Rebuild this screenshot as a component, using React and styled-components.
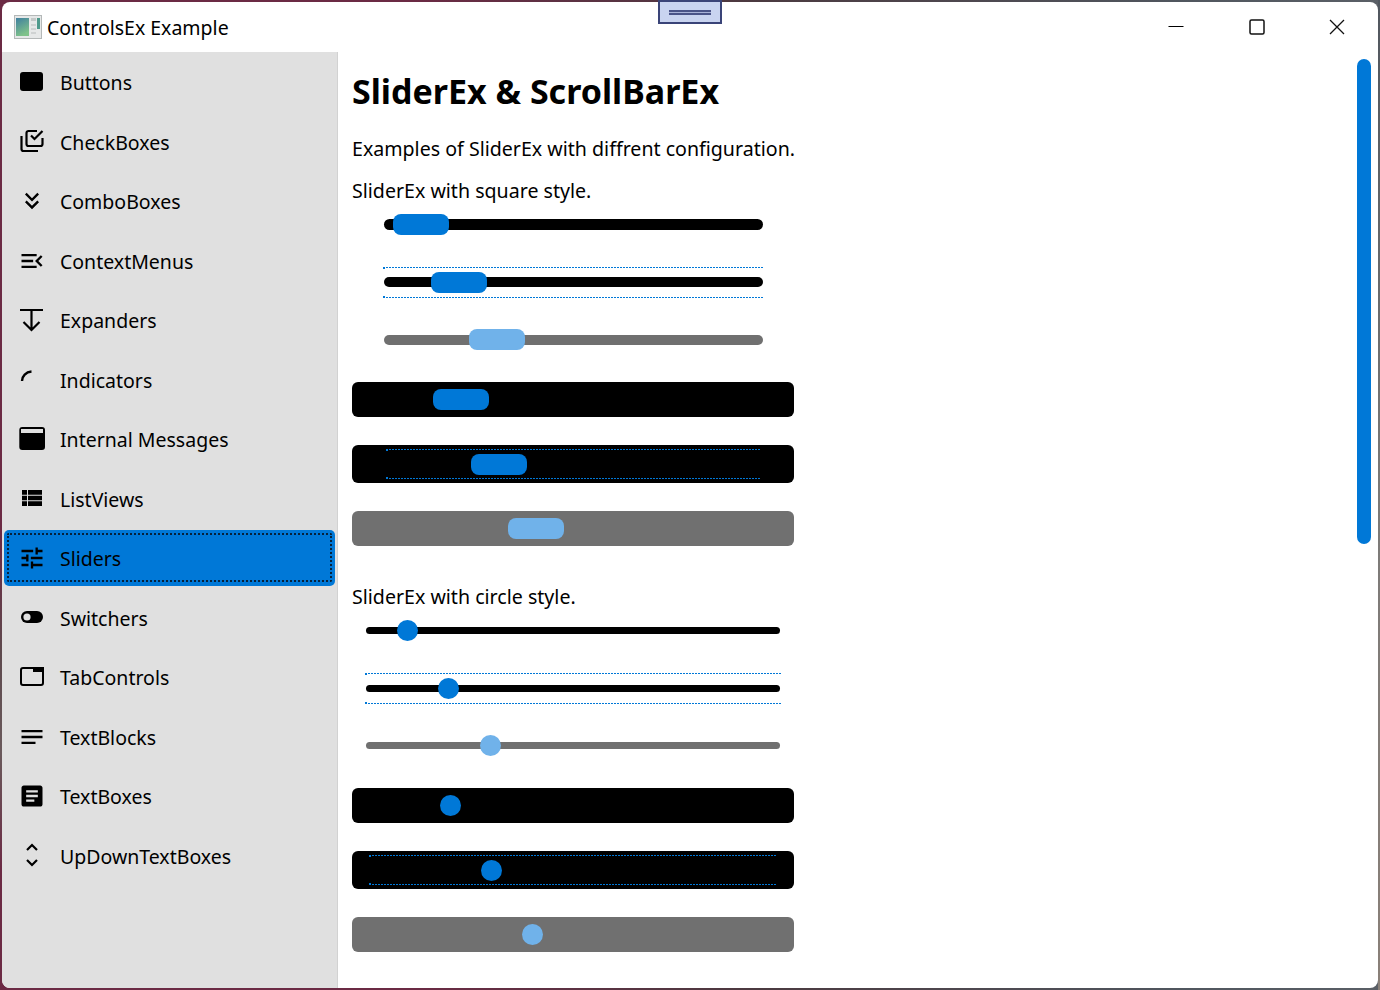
import React from "react";
import styled, { createGlobalStyle, css } from "styled-components";
import {
  MdKeyboardDoubleArrowDown,
  MdMenuOpen,
  MdTune,
  MdNotes,
  MdArticle,
} from "react-icons/md";

const GlobalStyle = createGlobalStyle`
  html, body {
    margin: 0;
    height: 990px;
    overflow: hidden;
  }
  body {
    font-family: "Noto Sans", "Open Sans", sans-serif;
    color: #000;
    background:
      linear-gradient(180deg, #6b2a44 0%, #6b2a44 55%, #5e4a4e 66%, #6a5a5c 76%, #6b2a44 88%) left top / 2px 100% no-repeat,
      linear-gradient(180deg, #50565e 0%, #7c7a78 50%, #8a8078 100%) right top / 2px 100% no-repeat,
      linear-gradient(90deg, #6b2a44 0%, #6b2a44 30%, #4b3a40 55%, #50565e 85%, #5a5f66 100%);
  }
`;

const Page = styled.div`
  padding: 2px;
  width: 1376px;
  height: 986px;
  position: relative;
`;

const Win = styled.div`
  width: 1376px;
  height: 986px;
  background: #fff;
  border-radius: 8px;
  overflow: hidden;
  display: flex;
  flex-direction: column;
`;

const TitleBar = styled.header`
  height: 50px;
  flex: none;
  display: flex;
  align-items: center;
  padding-left: 12px;
`;

const AppTitle = styled.span`
  margin-left: 5px;
  margin-top: 2px;
  font-size: 19.5px;
  line-height: 50px;
`;

const WindowButtons = styled.div`
  margin-left: auto;
  display: flex;
  padding: 0 0.5px 1px 0;
`;

const WindowButton = styled.div`
  width: 80.5px;
  height: 49px;
  display: flex;
  align-items: center;
  justify-content: center;
`;

const Grip = styled.div`
  position: absolute;
  left: 658px;
  top: 0;
  width: 64px;
  height: 24px;
  box-sizing: border-box;
  background: #c9d4f0;
  border: 2px solid #3a4478;
  display: flex;
  align-items: center;
  justify-content: center;
  padding-top: 1px;
  &::after {
    content: "";
    width: 42px;
    height: 1px;
    border-top: 2px solid #4a5488;
    border-bottom: 2px solid #4a5488;
    background: #a9b3d8;
  }
`;

const Body = styled.div`
  flex: 1;
  display: flex;
  min-height: 0;
`;

const Sidebar = styled.nav`
  width: 331px;
  flex: none;
  background: #e0e0e0;
  border-right: 1px solid #d2d2d2;
  padding: 2.25px 2px 0;
`;

const NavItem = styled.div`
  height: 56px;
  margin-bottom: 3.5px;
  border-radius: 5px;
  display: flex;
  align-items: center;
  padding-left: 14px;
  gap: 14px;
  font-size: 19.5px;
  line-height: 26px;
  position: relative;
  ${(p) =>
    p.$selected &&
    css`
      background: #0078d7;
      &::after {
        content: "";
        position: absolute;
        inset: 3px 3px 4px 3px;
        border: 2px dotted #06223c;
        border-radius: 2px;
      }
    `}
`;

const NavLabel = styled.span`
  padding-top: 2px;
`;

const NavIcon = styled.span`
  width: 28px;
  height: 28px;
  flex: none;
  display: flex;
  align-items: center;
  justify-content: center;
  svg {
    display: block;
  }
`;

const Main = styled.main`
  flex: 1;
  display: flex;
  min-width: 0;
`;

const Content = styled.div`
  flex: 1;
  padding: 17px 0 0 14px;
`;

const Heading = styled.h1`
  margin: 0;
  height: 44px;
  font-size: 34px;
  line-height: 44px;
  font-weight: 700;
`;

const Text = styled.p`
  margin: ${(p) => p.$top}px 0 0;
  height: 28px;
  font-size: 19.6px;
  line-height: 28px;
`;

const Scroll = styled.div`
  width: 14px;
  height: 485px;
  margin: 7px 7px 0 0;
  border-radius: 7px;
  background: #0078d7;
  flex: none;
`;

const Row = styled.div`
  position: relative;
  width: 442px;
  height: ${(p) => p.$height}px;
  margin-top: ${(p) => p.$top}px;
  display: flex;
  align-items: center;
  border-radius: ${(p) => (p.$filled ? "6px" : "0")};
  background: ${(p) =>
    !p.$filled ? "transparent" : p.$disabled ? "#707070" : "#000"};
`;

const Track = styled.div`
  flex: 1;
  height: ${(p) => p.$height}px;
  margin: 0 ${(p) => p.$right}px ${(p) => p.$nudge}px ${(p) => p.$left}px;
  border-radius: 6px;
  background: ${(p) => (p.$disabled ? "#707070" : "#000")};
`;

const Thumb = styled.div`
  position: absolute;
  width: ${(p) => (p.$round ? "21px" : "56px")};
  height: 21px;
  border-radius: ${(p) => (p.$round ? "50%" : "8px")};
  background: ${(p) => (p.$disabled ? "#70b2ea" : "#0078d7")};
`;

const FocusLines = styled.div`
  position: absolute;
  left: ${(p) => p.$left}px;
  right: ${(p) => p.$right}px;
  top: ${(p) => p.$top}px;
  bottom: ${(p) => p.$top}px;
  background:
    linear-gradient(#0078d7, #0078d7) left top / 2px 2px no-repeat,
    linear-gradient(#0078d7, #0078d7) left bottom / 2px 2px no-repeat;
  &::before,
  &::after {
    content: "";
    position: absolute;
    left: 0;
    right: 0;
    height: 1px;
    background: repeating-linear-gradient(90deg, #0078d7 0 2px, transparent 2px 3px);
  }
  &::before {
    top: 0;
  }
  &::after {
    bottom: 0;
  }
`;

const AppIcon = () => (
  <svg width="28" height="24" viewBox="0 0 28 24">
    <defs>
      <linearGradient id="appGrad" x1="0" y1="0" x2="0.4" y2="1">
        <stop offset="0" stopColor="#3f7f9f" />
        <stop offset="1" stopColor="#7fc28a" />
      </linearGradient>
    </defs>
    <rect x="0.5" y="0.5" width="27" height="23" fill="#e6e8e8" stroke="#b4b8b8" />
    <rect x="2" y="3" width="13" height="18" fill="url(#appGrad)" />
    <rect x="17" y="3" width="5" height="3" fill="#c4c8c8" />
    <rect x="23" y="3" width="3" height="11" fill="#4f9a8c" />
    <rect x="17" y="9" width="5" height="2" fill="#cfd2d2" />
    <rect x="17" y="13" width="5" height="2" fill="#cfd2d2" />
    <rect x="17" y="17" width="5" height="2" fill="#cfd2d2" />
  </svg>
);

const ButtonIcon = () => (
  <svg width="28" height="28" viewBox="0 0 28 28">
    <rect x="2" y="4" width="23" height="19" rx="3" />
  </svg>
);

const CheckIcon = () => (
  <svg width="28" height="28" viewBox="0 0 28 28" fill="none" stroke="#000" strokeWidth="2.2">
    <path d="M3.500 8V21a2 2 0 0 0 2 2H20" />
    <path d="M19 3H10.500a2 2 0 0 0-2 2V16a2 2 0 0 0 2 2H22.500a2 2 0 0 0 2-2V10" />
    <path d="M13 7.500l3.500 3.500L24.500 3" />
  </svg>
);

const ExpanderIcon = () => (
  <svg width="28" height="28" viewBox="0 0 28 28" fill="none" stroke="#000" strokeWidth="2.2">
    <path d="M2 4h23M13.500 4v20M5.500 16l8 8 8-8" />
  </svg>
);

const IndicatorIcon = () => (
  <svg width="28" height="28" viewBox="0 0 28 28" fill="none" stroke="#000" strokeWidth="2.4">
    <path d="M4 15C4 10 8 6 13.500 5.500" />
  </svg>
);

const MessageIcon = () => (
  <svg width="28" height="28" viewBox="0 0 28 28">
    <path
      fillRule="evenodd"
      d="M4.300 2h19.700a3 3 0 0 1 3 3v17a3 3 0 0 1-3 3H4.300a3 3 0 0 1-3-3V5a3 3 0 0 1 3-3zM3 4v4h22V4z"
    />
  </svg>
);

const ListIcon = () => (
  <svg width="28" height="28" viewBox="0 0 28 28">
    <path d="M4 5h5v4.700H4zM10 5h14v4.700H10zM4 10.700h5v4.600H4zM10 10.700h14v4.600H10zM4 16.300h5V21H4zM10 16.300h14V21H10z" />
  </svg>
);

const SwitchIcon = () => (
  <svg width="28" height="28" viewBox="0 0 28 28">
    <rect x="3" y="7" width="22" height="12" rx="6" />
    <circle cx="9" cy="13" r="3.600" fill="#e0e0e0" />
  </svg>
);

const TabIcon = () => (
  <svg width="28" height="28" viewBox="0 0 28 28">
    <rect x="3" y="5" width="22" height="17" rx="2" fill="none" stroke="#000" strokeWidth="2" />
    <rect x="15" y="4" width="11" height="5" />
  </svg>
);

const UpDownIcon = () => (
  <svg width="28" height="28" viewBox="0 0 28 28" fill="none" stroke="#000" strokeWidth="2.2">
    <path d="M9 8l5-5 5 5M9 18l5 5 5-5" />
  </svg>
);

const navItems = [
  ["Buttons", <ButtonIcon />],
  ["CheckBoxes", <CheckIcon />],
  ["ComboBoxes", <MdKeyboardDoubleArrowDown size={28} />],
  ["ContextMenus", <MdMenuOpen size={28} />],
  ["Expanders", <ExpanderIcon />],
  ["Indicators", <IndicatorIcon />],
  ["Internal Messages", <MessageIcon />],
  ["ListViews", <ListIcon />],
  ["Sliders", <MdTune size={28} />],
  ["Switchers", <SwitchIcon />],
  ["TabControls", <TabIcon />],
  ["TextBlocks", <MdNotes size={28} />],
  ["TextBoxes", <MdArticle size={28} />],
  ["UpDownTextBoxes", <UpDownIcon />],
];

const squareSliders = [
  { top: 4, at: 41, trackH: 11 },
  { top: 27, at: 79, trackH: 10, focus: [31, 30, 0], nudge: 1 },
  { top: 26, at: 117, trackH: 10, disabled: true },
  { top: 27, at: 81, filled: true, height: 35 },
  { top: 28, at: 119, filled: true, focus: [34, 34, 4], height: 38 },
  { top: 28, at: 156, filled: true, disabled: true, height: 35 },
];

const circleSliders = [
  { top: 4, at: 45, trackH: 7 },
  { top: 27, at: 86, trackH: 7, focus: [13, 13, 0] },
  { top: 26, at: 128, trackH: 7, disabled: true },
  { top: 27, at: 88, filled: true, height: 35 },
  { top: 28, at: 129, filled: true, focus: [17, 17, 4], height: 38 },
  { top: 28, at: 170, filled: true, disabled: true, height: 35 },
];

const Slider = ({ top, at, trackH, nudge = 0, focus, disabled, filled, height = 31, round }) => {
  const left = round ? 14 : 32;
  const right = round ? 14 : 31;
  return (
    <Row $height={height} $top={top} $filled={filled} $disabled={disabled}>
      {!filled && (
        <Track $height={trackH} $left={left} $right={right} $nudge={nudge} $disabled={disabled} />
      )}
      {focus && <FocusLines $left={focus[0]} $right={focus[1]} $top={focus[2]} />}
      <Thumb $round={round} $disabled={disabled} style={{ left: at }} />
    </Row>
  );
};

export default function App() {
  return (
    <>
      <GlobalStyle />
      <Page>
        <Grip />
        <Win>
          <TitleBar>
            <AppIcon />
            <AppTitle>ControlsEx Example</AppTitle>
            <WindowButtons>
              <WindowButton>
                <svg width="16" height="16" viewBox="0 0 16 16" stroke="#000" strokeWidth="1.2">
                  <path d="M0.500 7.500h15" />
                </svg>
              </WindowButton>
              <WindowButton>
                <svg width="16" height="16" viewBox="0 0 16 16" fill="none" stroke="#111" strokeWidth="1.5">
                  <rect x="1" y="1" width="14" height="14" rx="1.500" />
                </svg>
              </WindowButton>
              <WindowButton>
                <svg width="16" height="16" viewBox="0 0 16 16" fill="none" stroke="#111" strokeWidth="1.3">
                  <path d="M1 1l14 14M15 1L1 15" />
                </svg>
              </WindowButton>
            </WindowButtons>
          </TitleBar>
          <Body>
            <Sidebar>
              {navItems.map(([label, icon]) => (
                <NavItem key={label} $selected={label === "Sliders"}>
                  <NavIcon>{icon}</NavIcon>
                  <NavLabel>{label}</NavLabel>
                </NavItem>
              ))}
            </Sidebar>
            <Main>
              <Content>
                <Heading>SliderEx &amp; ScrollBarEx</Heading>
                <Text $top={22}>Examples of SliderEx with diffrent configuration.</Text>
                <Text $top={14}>SliderEx with square style.</Text>
                {squareSliders.map((s) => (
                  <Slider key={s.at} {...s} />
                ))}
                <Text $top={37}>SliderEx with circle style.</Text>
                {circleSliders.map((s) => (
                  <Slider key={s.at} round {...s} />
                ))}
              </Content>
              <Scroll />
            </Main>
          </Body>
        </Win>
      </Page>
    </>
  );
}
